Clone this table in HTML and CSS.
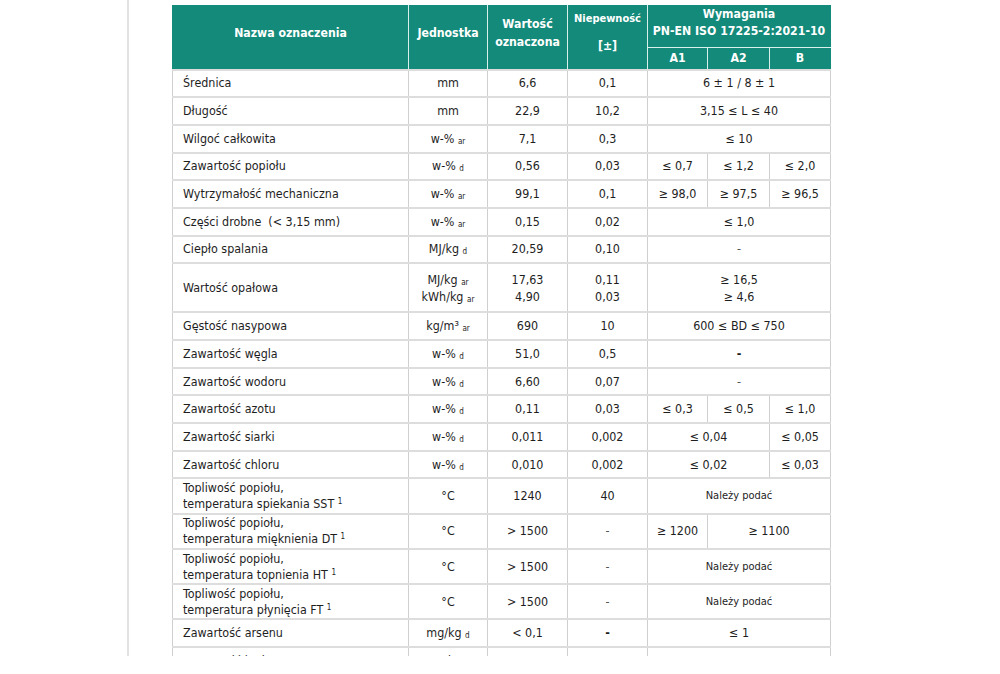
FILE: index.html
```html
<!DOCTYPE html>
<html lang="pl">
<head>
    <meta charset="UTF-8">
    <title>Parametry pelletu</title>
    <link rel="stylesheet" href="styles.css">
</head>
<body>

<div class="sheet">
    <table class="params">
        <colgroup>
            <col class="c-name">
            <col class="c-unit">
            <col class="c-val">
            <col class="c-unc">
            <col class="c-a1">
            <col class="c-a2">
            <col class="c-b">
        </colgroup>
        <thead>
            <tr class="h1">
                <th rowspan="2" class="mid">Nazwa oznaczenia</th>
                <th rowspan="2" class="mid">Jednostka</th>
                <th rowspan="2" class="mid">Wartość<br>oznaczona</th>
                <th rowspan="2" class="unc">
                    <span class="unc-title">Niepewność</span>
                    <span class="unc-sign">[±]</span>
                </th>
                <th colspan="3" class="req">Wymagania<br>PN-EN ISO 17225-2:2021-10</th>
            </tr>
            <tr class="h2">
                <th>A1</th>
                <th>A2</th>
                <th>B</th>
            </tr>
        </thead>
        <tbody>
            <tr>
                <td class="name">Średnica</td>
                <td>mm</td>
                <td>6,6</td>
                <td>0,1</td>
                <td colspan="3">6 ± 1 / 8 ± 1</td>
            </tr>
            <tr>
                <td class="name">Długość</td>
                <td>mm</td>
                <td>22,9</td>
                <td>10,2</td>
                <td colspan="3">3,15 ≤ L ≤ 40</td>
            </tr>
            <tr>
                <td class="name">Wilgoć całkowita</td>
                <td>w-% <sub>ar</sub></td>
                <td>7,1</td>
                <td>0,3</td>
                <td colspan="3">≤ 10</td>
            </tr>
            <tr>
                <td class="name">Zawartość popiołu</td>
                <td>w-% <sub>d</sub></td>
                <td>0,56</td>
                <td>0,03</td>
                <td>≤ 0,7</td>
                <td>≤ 1,2</td>
                <td>≤ 2,0</td>
            </tr>
            <tr>
                <td class="name">Wytrzymałość mechaniczna</td>
                <td>w-% <sub>ar</sub></td>
                <td>99,1</td>
                <td>0,1</td>
                <td>≥ 98,0</td>
                <td>≥ 97,5</td>
                <td>≥ 96,5</td>
            </tr>
            <tr>
                <td class="name">Części drobne&nbsp; (&lt; 3,15 mm)</td>
                <td>w-% <sub>ar</sub></td>
                <td>0,15</td>
                <td>0,02</td>
                <td colspan="3">≤ 1,0</td>
            </tr>
            <tr>
                <td class="name">Ciepło spalania</td>
                <td>MJ/kg <sub>d</sub></td>
                <td>20,59</td>
                <td>0,10</td>
                <td colspan="3" class="dash">-</td>
            </tr>
            <tr class="double">
                <td class="name">Wartość opałowa</td>
                <td>MJ/kg <sub>ar</sub><br>kWh/kg <sub>ar</sub></td>
                <td>17,63<br>4,90</td>
                <td>0,11<br>0,03</td>
                <td colspan="3">≥ 16,5<br>≥ 4,6</td>
            </tr>
            <tr>
                <td class="name">Gęstość nasypowa</td>
                <td>kg/m³ <sub>ar</sub></td>
                <td>690</td>
                <td>10</td>
                <td colspan="3">600 ≤ BD ≤ 750</td>
            </tr>
            <tr>
                <td class="name">Zawartość węgla</td>
                <td>w-% <sub>d</sub></td>
                <td>51,0</td>
                <td>0,5</td>
                <td colspan="3"><b>-</b></td>
            </tr>
            <tr>
                <td class="name">Zawartość wodoru</td>
                <td>w-% <sub>d</sub></td>
                <td>6,60</td>
                <td>0,07</td>
                <td colspan="3" class="dash">-</td>
            </tr>
            <tr>
                <td class="name">Zawartość azotu</td>
                <td>w-% <sub>d</sub></td>
                <td>0,11</td>
                <td>0,03</td>
                <td>≤ 0,3</td>
                <td>≤ 0,5</td>
                <td>≤ 1,0</td>
            </tr>
            <tr>
                <td class="name">Zawartość siarki</td>
                <td>w-% <sub>d</sub></td>
                <td>0,011</td>
                <td>0,002</td>
                <td colspan="2">≤ 0,04</td>
                <td>≤ 0,05</td>
            </tr>
            <tr>
                <td class="name">Zawartość chloru</td>
                <td>w-% <sub>d</sub></td>
                <td>0,010</td>
                <td>0,002</td>
                <td colspan="2">≤ 0,02</td>
                <td>≤ 0,03</td>
            </tr>
            <tr class="fusion">
                <td class="name">Topliwość popiołu,<br>temperatura spiekania SST <sup>1</sup></td>
                <td>°C</td>
                <td>1240</td>
                <td>40</td>
                <td colspan="3" class="note">Należy podać</td>
            </tr>
            <tr class="fusion">
                <td class="name">Topliwość popiołu,<br>temperatura mięknienia DT <sup>1</sup></td>
                <td>°C</td>
                <td>&gt; 1500</td>
                <td class="dash">-</td>
                <td>≥ 1200</td>
                <td colspan="2">≥ 1100</td>
            </tr>
            <tr class="fusion">
                <td class="name">Topliwość popiołu,<br>temperatura topnienia HT <sup>1</sup></td>
                <td>°C</td>
                <td>&gt; 1500</td>
                <td class="dash">-</td>
                <td colspan="3" class="note">Należy podać</td>
            </tr>
            <tr class="fusion">
                <td class="name">Topliwość popiołu,<br>temperatura płynięcia FT <sup>1</sup></td>
                <td>°C</td>
                <td>&gt; 1500</td>
                <td class="dash">-</td>
                <td colspan="3" class="note">Należy podać</td>
            </tr>
            <tr class="tall">
                <td class="name">Zawartość arsenu</td>
                <td>mg/kg <sub>d</sub></td>
                <td>&lt; 0,1</td>
                <td><b>-</b></td>
                <td colspan="3">≤ 1</td>
            </tr>
            <tr>
                <td class="name">Zawartość kadmu</td>
                <td>mg/kg <sub>d</sub></td>
                <td></td>
                <td></td>
                <td colspan="3"></td>
            </tr>
        </tbody>
    </table>
</div>

</body>
</html>
```

FILE: styles.css
```css
body {
    margin: 0;
    background: #fff;
    font-family: "DejaVu Sans Condensed", "DejaVu Sans", sans-serif;
    color: #1e1e1e;
}
.sheet {
    margin-left: 127px;
    width: 760px;
    height: 656px;
    overflow: hidden;
    border-left: 2px solid #e2e2e2;
    padding: 5px 0 0 43px;
    box-sizing: border-box;
}
.params {
    width: 658px;
    table-layout: fixed;
    border-collapse: collapse;
    font-size: 12.4px;
}
.c-name { width: 236px; }
.c-unit { width: 79px; }
.c-val { width: 80px; }
.c-unc { width: 80px; }
.c-a1 { width: 60px; }
.c-a2 { width: 62px; }
.c-b { width: 61px; }

/* header */
.params th {
    background: #148a7a;
    color: #fff;
    font-weight: bold;
    font-size: 12.2px;
    line-height: 18px;
    border: 1px solid #d9efeb;
    padding: 0;
    text-align: center;
}
.params .h1 th {
    border-top-color: #148a7a;
}
.params .h1 th:first-child {
    border-left-color: #148a7a;
}
.params .h1 th.req,
.params .h2 th:last-child {
    border-right-color: #148a7a;
}
.h1 {
    height: 42px;
}
.h2 {
    height: 22px;
}
.params th.mid {
    vertical-align: middle;
    padding-bottom: 8px;
}
.params th.unc {
    vertical-align: top;
    padding-top: 4px;
}
.unc-title {
    display: block;
    font-size: 11px;
    line-height: 17px;
}
.unc-sign {
    display: block;
    margin-top: 11px;
    line-height: 17px;
}
.params th.req {
    vertical-align: top;
    line-height: 17px;
    padding-top: 0;
}

/* body */
.params td {
    height: 25.7px;
    padding: 0;
    text-align: center;
    vertical-align: middle;
    line-height: 16px;
    border-left: 1px solid #cfcfcf;
    border-right: 1px solid #cfcfcf;
    border-top: 2px solid #dddddd;
    border-bottom: 2px solid #dddddd;
    white-space: nowrap;
}
.params td.name {
    text-align: left;
    padding-left: 10px;
}
.params .double td {
    height: 47px;
    line-height: 17px;
}
.params .fusion td {
    height: 33.25px;
}
.params .tall td {
    height: 26px;
}
sub {
    font-size: 8px;
    vertical-align: -1px;
    line-height: 0;
}
sup {
    font-size: 8px;
    vertical-align: 4px;
    line-height: 0;
}
.note {
    font-size: 11px;
}
.dash {
    color: #555;
}
```
